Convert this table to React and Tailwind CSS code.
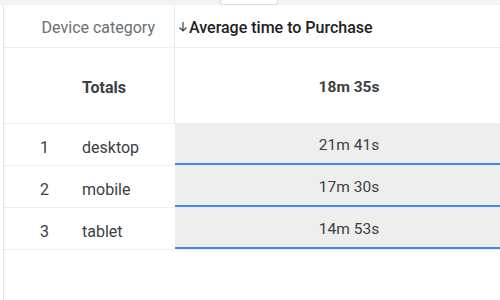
const rows = [
  { n: 1, name: "desktop", value: "21m 41s" },
  { n: 2, name: "mobile", value: "17m 30s" },
  { n: 3, name: "tablet", value: "14m 53s" },
];

export default function App() {
  return (
    <div className="w-[500px] h-[300px] overflow-hidden bg-white font-['Roboto','Liberation_Sans',sans-serif] text-[16px] text-[#3c4043]">
      <div className="h-[5px] bg-[#f3f3f3] flex">
        <div className="ml-[220px] w-[58px] h-[5px] bg-white border border-t-0 border-[#dadce0] rounded-b-[3px]" />
      </div>
      <div className="ml-[3px] h-[295px] border-l border-[#e3e3e3] w-[520px]">
        {/* header */}
        <div className="flex h-[43px] border-b border-[#eeeeee]">
          <div className="w-[171px] border-r border-[#e8e8e8] flex items-center justify-end pr-[19px] pt-[4px] text-[#6b6e72]">
            Device category
          </div>
          <div className="flex-1 flex items-center pl-[3px] pt-[4px] font-medium text-[#202124]">
            <svg width="10" height="12" viewBox="0 0 10 12" className="mr-[1px] mb-[2px]">
              <path d="M5 1v9M1.5 6.5L5 10l3.5-3.5" stroke="#3c4043" strokeWidth="1.2" fill="none" />
            </svg>
            Average time to Purchase
          </div>
        </div>
        {/* totals */}
        <div className="flex h-[76px] border-b border-[#eeeeee]">
          <div className="w-[171px] border-r border-[#e8e8e8] flex items-center pl-[78px] pt-[5px] font-bold text-[#3c4043]">
            Totals
          </div>
          <div className="flex-1 flex items-center justify-center pt-[5px] font-bold text-[15.5px] text-[#3c4043]">
            18m 35s
          </div>
        </div>
        {rows.map((r) => (
          <div key={r.n} className="flex h-[42px] border-b border-[#eeeeee]">
            <div className="w-[171px] flex items-center pt-[6px]">
              <span className="w-[78px] pl-[36px]">{r.n}</span>
              <span>{r.name}</span>
            </div>
            <div className="flex-1 flex flex-col bg-[#eeeeee]">
              <div className="flex-1 flex items-center justify-center pt-[5px] text-[15.5px]">{r.value}</div>
              <div className="h-[2px] bg-[#4285f4]" />
            </div>
          </div>
        ))}
      </div>
    </div>
  );
}
